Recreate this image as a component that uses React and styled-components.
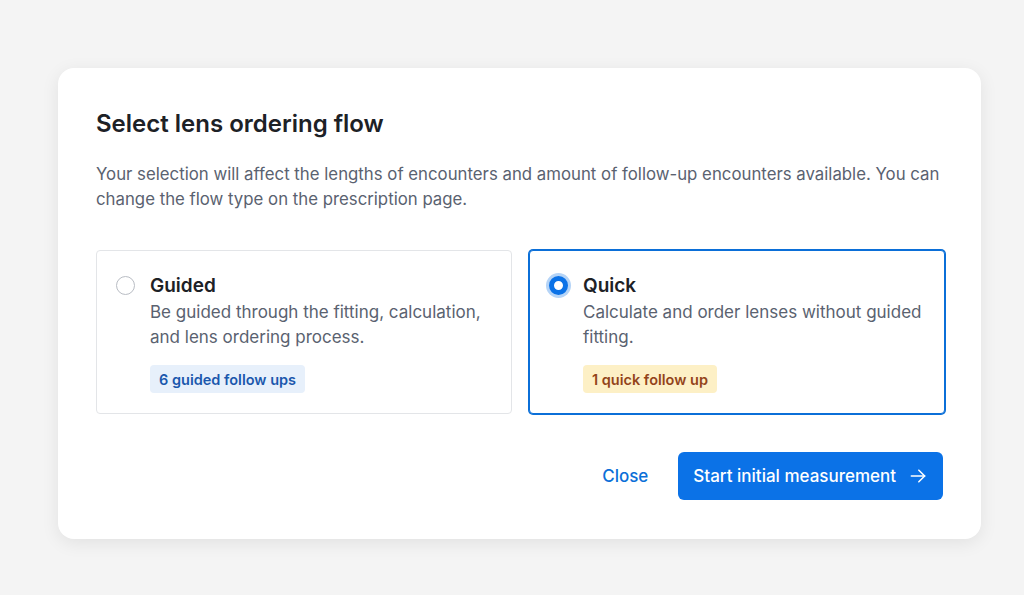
import styled, { createGlobalStyle } from "styled-components"
import { useState } from "react"

const GlobalStyle = createGlobalStyle`
  html, body {
    margin: 0;
    padding: 0;
    background: #f4f4f4;
    font-family: Inter, "Noto Sans", "Liberation Sans", sans-serif;
  }
  * { box-sizing: border-box; }
`

const Page = styled.div`
  min-height: 595px;
  padding: 68px 0 0 58px;
`

const Modal = styled.div`
  width: 923px;
  background: #ffffff;
  border-radius: 16px;
  box-shadow: 0 4px 18px rgba(0, 0, 0, 0.08);
  padding: 42px 36px 39px 38px;
`

const Title = styled.h2`
  margin: 0;
  font-size: 24px;
  line-height: 28px;
  font-weight: 600;
  color: #1d2126;
`

const Description = styled.p`
  margin: 24px 0 0;
  font-size: 16.8px;
  line-height: 25px;
  color: #5a6270;
`

const Options = styled.div`
  display: grid;
  grid-template-columns: 1fr 1fr;
  gap: 17px;
  margin-top: 38px;
`

const OptionCard = styled.label`
  display: flex;
  gap: 15px;
  padding: 23px 20px 20px 20px;
  border: 1px solid ${(p) => (p.$selected ? "#0b6fd8" : "#e3e5e8")};
  box-shadow: ${(p) => (p.$selected ? "0 0 0 1px #0b6fd8" : "none")};
  border-radius: 4px;
  background: #fff;
  cursor: pointer;
`

const Radio = styled.span`
  flex: none;
  width: 19px;
  height: 19px;
  margin-top: 2px;
  margin-left: -1px;
  border-radius: 50%;
  border: ${(p) => (p.$checked ? "5px solid #0b72e7" : "1.5px solid #b9bdc4")};
  background: #fff;
  box-shadow: ${(p) => (p.$checked ? "0 0 0 3px #b5d4f7" : "none")};
`

const OptionBody = styled.div`
  display: flex;
  flex-direction: column;
  align-items: flex-start;
`

const OptionTitle = styled.div`
  font-size: 19px;
  line-height: 24px;
  font-weight: 600;
  color: #1d2126;
`

const OptionText = styled.div`
  margin-top: 2px;
  font-size: 17px;
  line-height: 25px;
  color: #5a6270;
`

const Badge = styled.span`
  margin-top: 15px;
  padding: 0 9px;
  height: 28px;
  display: inline-flex;
  align-items: center;
  border-radius: 4px;
  font-size: 14.5px;
  font-weight: 600;
  background: ${(p) => (p.$tone === "warn" ? "#fdf0c6" : "#e7f0fb")};
  color: ${(p) => (p.$tone === "warn" ? "#93441a" : "#1b58ad")};
`

const Footer = styled.div`
  display: flex;
  justify-content: flex-end;
  align-items: center;
  gap: 14px;
  margin-top: 38px;
  padding-right: 2px;
`

const TextButton = styled.button`
  border: none;
  background: none;
  padding: 0 16px;
  height: 48px;
  font-family: inherit;
  font-size: 17px;
  font-weight: 500;
  color: #0b6fd8;
  cursor: pointer;
`

const PrimaryButton = styled.button`
  display: inline-flex;
  align-items: center;
  gap: 12px;
  height: 48px;
  padding: 0 15px;
  border: none;
  border-radius: 6px;
  background: #0b72e7;
  color: #fff;
  font-family: inherit;
  font-size: 17px;
  font-weight: 500;
  cursor: pointer;
`

const ArrowRight = () => (
  <svg width="20" height="20" viewBox="0 0 24 24" fill="none" stroke="currentColor" strokeWidth="1.8" strokeLinecap="round" strokeLinejoin="round">
    <path d="M4 12h16" />
    <path d="M13 5l7 7-7 7" />
  </svg>
)

const options = [
  {
    id: "guided",
    title: "Guided",
    text: "Be guided through the fitting, calculation, and lens ordering process.",
    badge: "6 guided follow ups",
    tone: "info",
  },
  {
    id: "quick",
    title: "Quick",
    text: "Calculate and order lenses without guided fitting.",
    badge: "1 quick follow up",
    tone: "warn",
  },
]

export default function App() {
  const [flow, setFlow] = useState("quick")

  return (
    <>
      <GlobalStyle />
      <Page>
        <Modal>
          <Title>Select lens ordering flow</Title>
          <Description>
            Your selection will affect the lengths of encounters and amount of follow-up encounters available. You can change the flow type on the prescription page.
          </Description>
          <Options>
            {options.map((o) => (
              <OptionCard key={o.id} $selected={flow === o.id} onClick={() => setFlow(o.id)}>
                <Radio $checked={flow === o.id} />
                <OptionBody>
                  <OptionTitle>{o.title}</OptionTitle>
                  <OptionText>{o.text}</OptionText>
                  <Badge $tone={o.tone}>{o.badge}</Badge>
                </OptionBody>
              </OptionCard>
            ))}
          </Options>
          <Footer>
            <TextButton>Close</TextButton>
            <PrimaryButton>
              Start initial measurement
              <ArrowRight />
            </PrimaryButton>
          </Footer>
        </Modal>
      </Page>
    </>
  )
}
